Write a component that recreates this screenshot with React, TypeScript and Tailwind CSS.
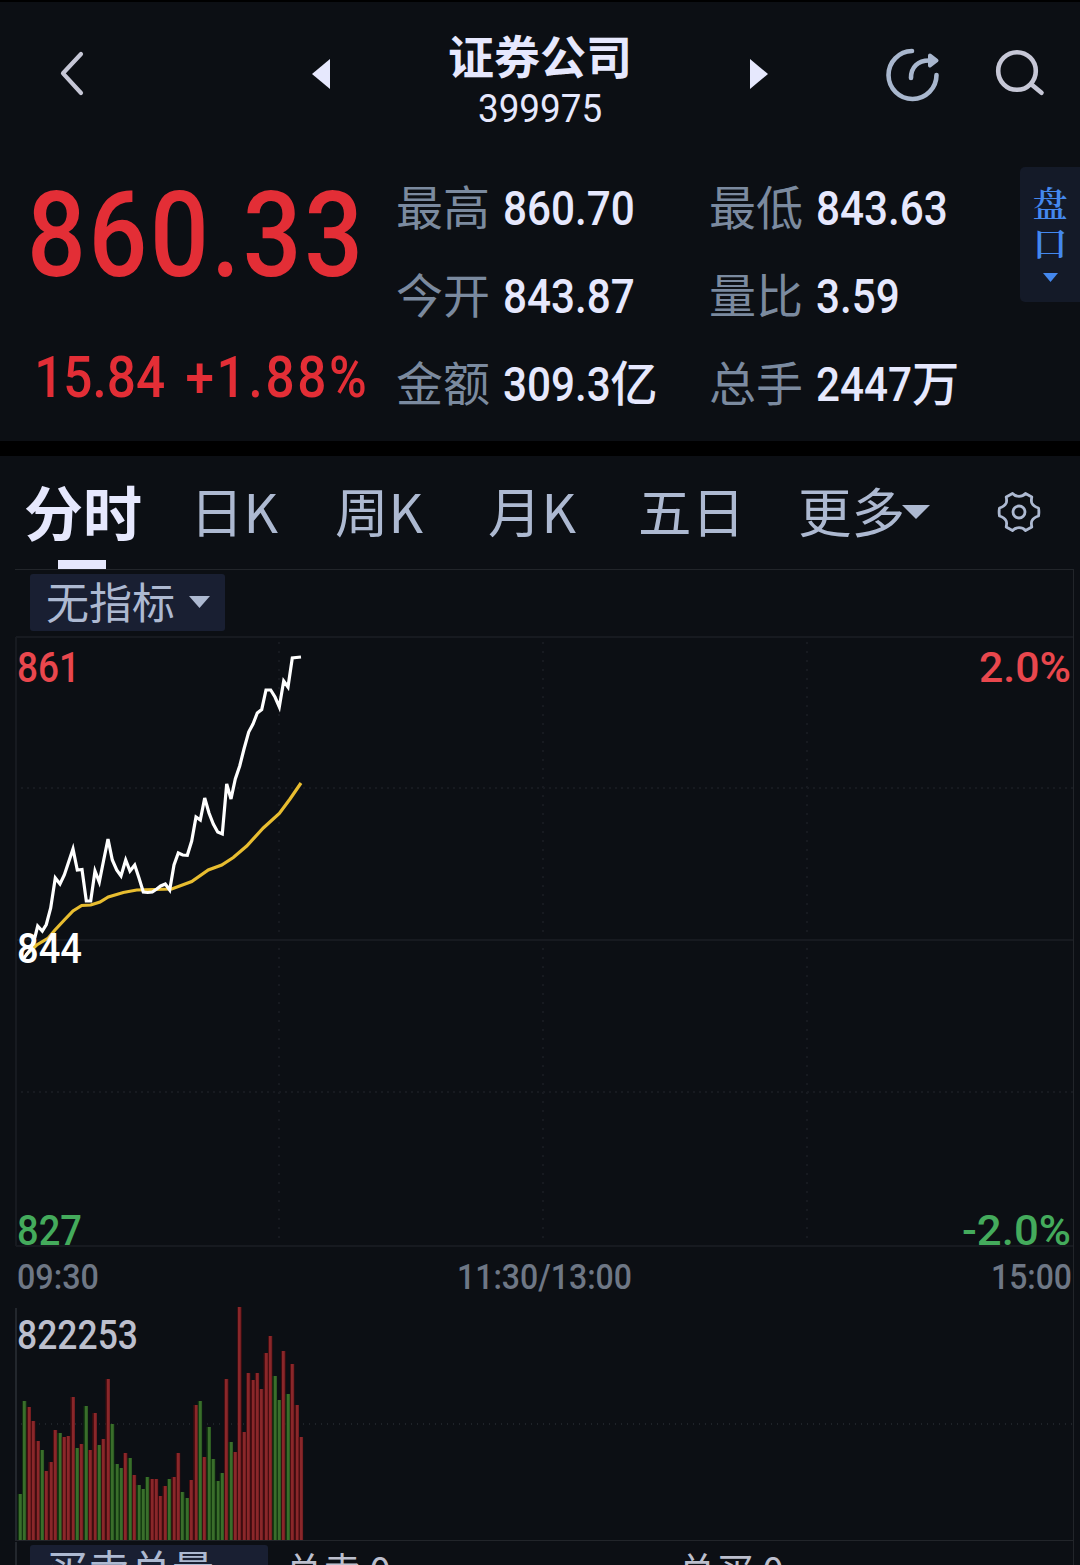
import type { ReactNode } from 'react';

const UP = '#e9474d';
const DOWN = '#44ab5c';

const stats = [
  { label: '最高', value: '860.70', unit: '' },
  { label: '最低', value: '843.63', unit: '' },
  { label: '今开', value: '843.87', unit: '' },
  { label: '量比', value: '3.59', unit: '' },
  { label: '金额', value: '309.3', unit: '亿' },
  { label: '总手', value: '2447', unit: '万' },
];

const tabs = [
  { label: '日K', width: 'w-[145px]' },
  { label: '周K', width: 'w-[153px]' },
  { label: '月K', width: 'w-[150px]' },
  { label: '五日', width: 'w-[160px]' },
];

const price: [number, number][] = [
  [24, 958], [30, 950], [35, 937], [37.7, 926], [42.3, 931], [46.3, 924.5], [50.7, 908], [55.3, 878], [60, 884],
  [64.3, 875], [68.3, 863], [73, 849], [77.3, 870], [82, 869.5], [86.3, 901], [90.7, 901], [95, 871], [99.3, 882],
  [103.7, 860], [108, 839], [112.3, 860], [116.7, 870], [121, 876], [125.7, 860], [130, 871], [134.7, 865],
  [139, 878], [143.3, 892], [147.7, 892.5], [152.3, 892], [156.7, 889], [160.7, 886], [165.3, 884], [169.7, 890],
  [174, 865], [178.3, 853], [182.7, 855], [187.3, 855.3], [191.7, 841], [196, 817], [200.3, 820], [204.7, 798],
  [209, 813], [213.3, 824], [217.7, 832], [222.3, 834], [226.7, 784], [231, 799], [235.3, 779], [239.7, 766],
  [244, 749], [248.7, 732], [253, 724], [257.3, 713], [261.7, 709.5], [266, 690], [270.7, 690], [275, 697],
  [279.3, 707], [283.7, 681], [288, 687], [292.3, 658], [301, 657],
];

const average: [number, number][] = [
  [26, 955], [36.7, 945], [48.3, 938], [55, 930], [64.3, 920], [73, 911], [81.7, 905.5], [90.7, 905], [100, 902],
  [108.3, 897], [123.3, 892.5], [136.7, 890], [171.7, 889], [191.7, 881.5], [208.3, 870], [221.7, 865],
  [233.3, 857.5], [246.7, 846], [263.3, 828], [279.3, 813.5], [290, 799], [301, 783],
];

// one bar per minute: height in px, negative when the minute closed lower
const volume = [
  -46, -139, 133, 119, 99, -90, 69, 78, 110, -107, 103, 104, 143, -92, 96, -134, 90, 127, -95, 101, 161, -116, -76,
  -72, 87, -82, 65, -55, -51, -63, 61, 61, 44, 54, -61, 63, 87, -48, -42, 60, 135, -139, 83, -113, -81, -59, -67,
  161, -98, 88, 233, 108, 167, 160, 167, 151, 187, 204, -164, -140, 189, -146, 176, 135, 103,
];

const toPoints = (list: [number, number][]) => list.map((p) => p.join(',')).join(' ');

function Caret({ className }: { className: string }) {
  return (
    <svg viewBox="0 0 20 10" preserveAspectRatio="none" className={className} fill="currentColor">
      <path d="M0 0H20L10 10Z" />
    </svg>
  );
}

interface AxisLabelProps {
  x: number;
  y: number;
  length: number;
  size?: number;
  fill: string;
  children: ReactNode;
}

function AxisLabel({ x, y, length, size = 42, fill, children }: AxisLabelProps) {
  return (
    <text
      x={x}
      y={y}
      textLength={length}
      lengthAdjust="spacingAndGlyphs"
      fontSize={size}
      fill={fill}
      className="font-['Roboto',sans-serif] font-medium"
    >
      {children}
    </text>
  );
}

function Header() {
  return (
    <header className="flex h-[148px] shrink-0 items-start">
      <svg width="440" height="148" viewBox="0 2 440 148" fill="none">
        <path d="M81 54L63 73.3L81 93" stroke="#c6c7d6" strokeWidth="4.2" strokeLinecap="round" strokeLinejoin="round" />
        <path d="M312 74L330 59V89Z" fill="#e6e8fd" />
      </svg>
      <div className="flex w-[200px] flex-col items-center text-[#e6e8fd]">
        <h1 className="mt-[25px] text-[46px] font-bold leading-[54px]">证券公司</h1>
        <p className="mt-[6px] scale-x-[0.97] font-['Roboto',sans-serif] text-[38px] leading-[44px]">399975</p>
      </div>
      <svg width="440" height="148" viewBox="640 2 440 148" fill="none">
        <path d="M768 74L750 59V89Z" fill="#e6e8fd" />
        <g stroke="#a9b7ce" strokeWidth="4.6" strokeLinecap="round" strokeLinejoin="round">
          <path d="M912 51A24 24 0 1 0 936.5 75" />
          <path d="M911 78C911 67 918 60.5 929 60.5" />
          <path d="M930 55.5L936.5 60.5L930 65.5Z" fill="#a9b7ce" strokeWidth="4" />
        </g>
        <g stroke="#c6c7d6" strokeWidth="4.6" strokeLinecap="round">
          <circle cx="1017" cy="71" r="18.8" />
          <path d="M1031.5 84.5L1041.5 92.8" />
        </g>
      </svg>
    </header>
  );
}

function Quote() {
  return (
    <section className="flex h-[291px] shrink-0 items-start">
      <div className="w-[396px] pl-[27px] font-['Roboto',sans-serif] text-[#e32e36]">
        <div className="mt-[15px] h-[142px] origin-left scale-x-[0.87] text-[119px] font-medium leading-[142px] tracking-[3px]">
          860.33
        </div>
        <div className="mt-[36px] flex h-[70px] w-[400px] origin-left scale-x-[0.9] pl-[8px] text-[57px] font-medium leading-[70px]">
          <span className="w-[168px]">15.84</span>
          <span className="tracking-[3px]">+1.88%</span>
        </div>
      </div>
      <dl className="grid w-[624px] grid-cols-[313px_311px] pt-[15px]">
        {stats.map((s) => (
          <div key={s.label} className="flex h-[88px] items-center">
            <dt className="-mt-[8px] w-[107px] text-[47px] text-[#7b8a9f]">{s.label}</dt>
            <dd className="flex origin-left scale-x-[0.88] items-center font-['Roboto','Noto_Sans_CJK_SC',sans-serif] text-[48px] font-medium text-[#e6e8fd]">
              {s.value}
              {s.unit && <span className="origin-left scale-x-[1.12]">{s.unit}</span>}
            </dd>
          </div>
        ))}
      </dl>
      <button className="mt-[17px] flex h-[135px] w-[60px] flex-col items-center rounded-l-[5px] bg-[#141a28] pt-[15px] text-[#4488ee]">
        <span className="w-[35px] break-all font-['Noto_Serif_CJK_SC','Noto_Sans_CJK_SC',serif] text-[35px] font-semibold leading-[40px]">
          盘口
        </span>
        <Caret className="mt-[11px] h-[9px] w-[15px]" />
      </button>
    </section>
  );
}

function TabBar() {
  return (
    <nav className="flex h-[113px] shrink-0 items-start pl-[24px] text-[53.5px] leading-[107px] text-[#adb9d1]">
      <div className="relative w-[166px] text-[59px] font-bold leading-[110px] text-[#e6e8fd]">
        分时
        <span className="absolute left-[34px] top-[104px] h-[9px] w-[48px] bg-[#e6e8fd]" />
      </div>
      {tabs.map((t) => (
        <div key={t.label} className={t.width}>
          {t.label}
        </div>
      ))}
      <div className="flex w-[198px] items-center">
        更多
        <Caret className="-ml-[3px] mt-[4px] h-[14px] w-[28px]" />
      </div>
      <svg className="mt-[33px]" width="46" height="46" viewBox="-23 -23 46 46" fill="none" stroke="#adb9d1" strokeWidth="2.8">
        <circle r="6" />
        <path
          strokeLinejoin="round"
          d="M-6.5 -18.5Q-4 -15.7 0 -15.7T6.5 -18.5L12.8 -15Q12 -11 12.8 -9Q14.5 -5.5 19.5 -4Q20.3 0 19.5 4Q14.5 5.5 12.8 9Q12 11 12.8 15L6.5 18.5Q4 15.7 0 15.7T-6.5 18.5L-12.8 15Q-12 11 -12.8 9Q-14.5 5.5 -19.5 4Q-20.3 0 -19.5 -4Q-14.5 -5.5 -12.8 -9Q-12 -11 -12.8 -15Z"
        />
      </svg>
    </nav>
  );
}

function Chart() {
  return (
    <svg className="block shrink-0" width="1080" height="909" viewBox="0 633 1080 909" fill="none">
      <g stroke="#171a20" strokeWidth="2">
        <path d="M16 637H1073M16 940H1073M16 1246H1073M16 637V1246" />
        <path d="M21 788H1073M21 1092H1073" strokeDasharray="2 4" />
        <path d="M279 642V1246M543 642V1246M807 642V1246" strokeDasharray="2 7" />
        <path d="M21 1424H1073" stroke="#1f2329" strokeDasharray="1 5" />
      </g>
      <path d="M16 1308V1540" stroke="#23272d" strokeWidth="2" />
      <path d="M15 1540.5H1073M1073.5 633V1542" stroke="#22252a" />

      <polyline points={toPoints(average)} stroke="#e8bd30" strokeWidth="3.2" />
      <polyline points={toPoints(price)} stroke="#ffffff" strokeWidth="3.2" />

      {volume.map((v, i) => {
        const x = 20 + i * 4.39;
        const h = Math.abs(v);
        return (
          <g key={i}>
            <rect x={x - 2.2} y={1540 - h} width="4.4" height={h} fill={v > 0 ? '#4a0e11' : '#143a11'} />
            <rect x={Math.round(x) - 1} y={1540 - h} width="2.7" height={h} fill={v > 0 ? '#8a272a' : '#3a6e2b'} />
          </g>
        );
      })}

      <AxisLabel x={17} y={682} length={63} fill={UP}>861</AxisLabel>
      <AxisLabel x={979} y={682} length={92} fill={UP}>2.0%</AxisLabel>
      <AxisLabel x={17} y={963} length={65} fill="#ffffff">844</AxisLabel>
      <AxisLabel x={17} y={1245} length={65} fill={DOWN}>827</AxisLabel>
      <AxisLabel x={962} y={1245} length={109} fill={DOWN}>-2.0%</AxisLabel>
      <AxisLabel x={17} y={1289} length={82} size={35} fill="#6e7785">09:30</AxisLabel>
      <AxisLabel x={457} y={1289} length={175} size={35} fill="#6e7785">11:30/13:00</AxisLabel>
      <AxisLabel x={991} y={1289} length={81} size={35} fill="#6e7785">15:00</AxisLabel>
      <AxisLabel x={17} y={1349} length={121} size={40} fill="#bcbfcd">822253</AxisLabel>
    </svg>
  );
}

export default function App() {
  return (
    <div className="flex h-[1565px] w-[1080px] flex-col overflow-hidden border-t-2 border-black bg-[#0c0f14] font-['Noto_Sans_CJK_SC',sans-serif]">
      <Header />
      <Quote />
      <div className="h-[15px] shrink-0 bg-black" />
      <TabBar />
      <main>
        <div className="ml-[15px] h-[64px] w-[1059px] border-r border-t border-[#22252a] pl-[15px] pt-[4px]">
          <button className="flex h-[57px] w-[195px] items-center rounded-[3px] bg-[#191f32] pl-[16px] text-[43px] leading-[57px] text-[#adb9d1]">
            <span className="-mt-[5px]">无指标</span>
            <Caret className="-mt-px ml-[14px] h-[12px] w-[21px]" />
          </button>
        </div>
        <Chart />
        <div className="ml-[15px] flex h-[40px] w-[1059px] items-start border-l-2 border-r border-l-[#23272d] border-r-[#22252a] text-[38px] leading-[46px] text-[#bcbfcd]">
          <div className="ml-[13px] mt-[3px] h-[60px] w-[238px] rounded-[3px] bg-[#191f32] pl-[16px] text-[42px] text-[#adb9d1]">
            买卖总量
          </div>
          <div className="ml-[17px] mt-[4px] w-[393px] whitespace-pre">总卖 0</div>
          <div className="mt-[4px]">总买 0</div>
        </div>
      </main>
    </div>
  );
}
